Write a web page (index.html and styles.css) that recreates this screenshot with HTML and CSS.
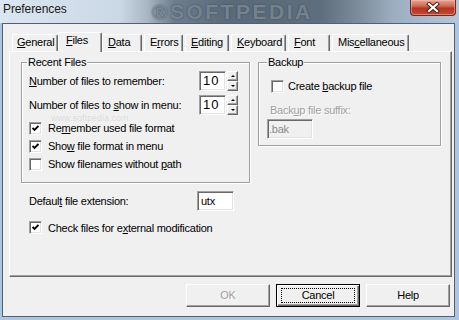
FILE: index.html
```html
<!DOCTYPE html>
<html lang="en">
<head>
    <meta charset="UTF-8">
    <title>Preferences</title>
    <link rel="stylesheet" href="styles.css">
</head>
<body>
    <div class="window">
        <div class="titlebar">
            <span class="title">Preferences</span>
            <span class="title-mark">&reg;SOFTPEDIA</span>
            <div class="close-btn">
                <svg width="14" height="11" viewBox="0 0 14 11">
                    <path d="M3 2 L11 9 M11 2 L3 9" stroke="#4a1a12" stroke-width="4" stroke-linecap="square"/>
                    <path d="M3 2 L11 9 M11 2 L3 9" stroke="#ffffff" stroke-width="2.2" stroke-linecap="square"/>
                </svg>
            </div>
        </div>

        <div class="client">
            <div class="tabs">
                <div class="tab tab-general"><u>G</u>eneral</div>
                <div class="tab tab-files active"><u>F</u>iles</div>
                <div class="tab tab-data"><u>D</u>ata</div>
                <div class="tab tab-errors">E<u>r</u>rors</div>
                <div class="tab tab-editing"><u>E</u>diting</div>
                <div class="tab tab-keyboard"><u>K</u>eyboard</div>
                <div class="tab tab-font"><u>F</u>ont</div>
                <div class="tab tab-misc">Mis<u>c</u>ellaneous</div>
            </div>

            <div class="pane">
                <span class="mark-small">www.softpedia.com</span>

                <div class="groups">
                    <fieldset class="group recent">
                        <legend>Recent Files</legend>
                        <div class="field-row">
                            <label class="field-label"><u>N</u>umber of files to remember:</label>
                            <div class="edit num">10</div>
                            <div class="spin-btns">
                                <span class="spin-btn"><i class="arrow-up"></i></span>
                                <span class="spin-btn"><i class="arrow-down"></i></span>
                            </div>
                        </div>
                        <div class="field-row second">
                            <label class="field-label">Number of files to <u>s</u>how in menu:</label>
                            <div class="edit num">10</div>
                            <div class="spin-btns">
                                <span class="spin-btn"><i class="arrow-up"></i></span>
                                <span class="spin-btn"><i class="arrow-down"></i></span>
                            </div>
                        </div>
                        <div class="check first">
                            <span class="box"><svg width="7" height="7" viewBox="0 0 7 7"><path d="M0.5 3 L2.5 5 L6.5 1" fill="none" stroke="#000" stroke-width="1.8"/></svg></span>
                            <span>Re<u>m</u>ember used file format</span>
                        </div>
                        <div class="check">
                            <span class="box"><svg width="7" height="7" viewBox="0 0 7 7"><path d="M0.5 3 L2.5 5 L6.5 1" fill="none" stroke="#000" stroke-width="1.8"/></svg></span>
                            <span>Sho<u>w</u> file format in menu</span>
                        </div>
                        <div class="check">
                            <span class="box"></span>
                            <span>Show filenames without <u>p</u>ath</span>
                        </div>
                    </fieldset>

                    <fieldset class="group backup">
                        <legend>Backup</legend>
                        <div class="check">
                            <span class="box"></span>
                            <span>Create <u>b</u>ackup file</span>
                        </div>
                        <div class="disabled-label">Back<u>u</u>p file suffix:</div>
                        <div class="edit suffix">.bak</div>
                    </fieldset>
                </div>

                <div class="field-row ext-row">
                    <label class="field-label ext-label">Defaul<u>t</u> file extension:</label>
                    <div class="edit ext">utx</div>
                </div>
                <div class="check ext-check">
                    <span class="box"><svg width="7" height="7" viewBox="0 0 7 7"><path d="M0.5 3 L2.5 5 L6.5 1" fill="none" stroke="#000" stroke-width="1.8"/></svg></span>
                    <span>Check files for e<u>x</u>ternal modification</span>
                </div>
            </div>

            <div class="buttons">
                <div class="btn disabled">OK</div>
                <div class="btn default">Cancel</div>
                <div class="btn">Help</div>
            </div>
        </div>
    </div>
</body>
</html>
```

FILE: styles.css
```css
* {
    box-sizing: border-box;
}
body {
    margin: 0;
    font-family: "Liberation Sans", Arial, sans-serif;
    font-size: 11px;
    letter-spacing: -0.25px;
    color: #000;
    background-color: #aac6e2;
}
u {
    text-decoration: underline;
    text-underline-offset: 1px;
}

/* window frame */
.window {
    width: 459px;
    height: 320px;
    display: flex;
    flex-direction: column;
    background-color: #aac6e2;
}
.titlebar {
    position: relative;
    flex: none;
    height: 23px;
    display: flex;
    align-items: flex-start;
    background: linear-gradient(90deg, #dae6f1 0%, #cbd8e5 26%, #a9b6c3 32%, #6e7d8b 38%, #5b6a78 50%, #5f6e7c 70%, #7d8c9a 78%, #9cafc2 86%, #b3c7db 100%);
}
.title {
    position: relative;
    z-index: 1;
    margin: 2px 0 0 3px;
    font-size: 12px;
    line-height: 14px;
    letter-spacing: -0.1px;
    color: #1a1a1a;
}
.title-mark {
    position: absolute;
    left: 152px;
    top: 0;
    font-size: 21px;
    line-height: 23px;
    font-weight: bold;
    letter-spacing: 2.5px;
    color: rgba(140, 154, 168, 0.7);
    text-shadow: 0 0 2px #3a4856;
}
.close-btn {
    position: relative;
    z-index: 1;
    margin-left: auto;
    margin-right: 3px;
    width: 46px;
    height: 16px;
    display: flex;
    align-items: center;
    justify-content: center;
    border: 1px solid #6e2a20;
    border-top: none;
    border-radius: 0 0 4px 4px;
    background: linear-gradient(180deg, #e3a795 0%, #d06a56 40%, #b8331f 55%, #c24a34 100%);
    box-shadow: inset 0 0 0 1px rgba(255, 200, 190, 0.45);
}

.client {
    flex: 1;
    display: flex;
    flex-direction: column;
    margin: 0 4px 3px 2px;
    padding: 8px 2px 0 6px;
    border: 1px solid #55606c;
    background-color: #f0f0f0;
}

/* tabs */
.tabs {
    position: relative;
    z-index: 1;
    display: flex;
    align-items: flex-end;
    gap: 2px;
    height: 19px;
    padding-left: 3px;
}
.tab {
    height: 17px;
    padding-left: 5px;
    line-height: 15px;
    white-space: nowrap;
    border: 1px solid;
    border-color: #fff #696969 transparent #fff;
    border-bottom: none;
    border-radius: 2px 2px 0 0;
    box-shadow: inset -1px 0 0 #a0a0a0;
    background-color: #f0f0f0;
}
.tab.active {
    height: 20px;
    margin: 0 -2px -1px;
    padding-left: 7px;
}
.tab-general { width: 46px; padding-left: 4px; }
.tab-files { width: 40px; }
.tab-files.active { width: 44px; }
.tab-data { width: 40px; }
.tab-errors { width: 39px; }
.tab-editing { width: 44px; }
.tab-keyboard { width: 55px; }
.tab-font { width: 42px; }
.tab-misc { width: 77px; }

.pane {
    position: relative;
    flex: none;
    height: 226px;
    padding: 4px 9px 0 11px;
    border: 1px solid;
    border-color: #fff #696969 #696969 #fff;
    box-shadow: inset -1px -1px 0 #a0a0a0;
}
.mark-small {
    position: absolute;
    left: 41px;
    top: 61px;
    font-size: 9px;
    letter-spacing: 0;
    color: rgba(0, 0, 0, 0.12);
    pointer-events: none;
}

/* group boxes */
.groups {
    display: flex;
    gap: 8px;
    align-items: flex-start;
}
.group {
    margin: 0;
    display: flex;
    flex-direction: column;
    border: 1px solid #a0a0a0;
    box-shadow: 1px 1px 0 #fff, inset 1px 1px 0 #fff;
}
.group legend {
    padding: 0 1px;
    line-height: 13px;
    background-color: #f0f0f0;
}
.recent {
    width: 229px;
    padding: 2px 0 9px 7px;
}
.recent legend {
    margin-left: -2px;
}
.backup {
    width: 183px;
    padding: 7px 0 6px 12px;
}
.backup legend {
    margin-left: -4px;
}

/* fields */
.field-row {
    display: flex;
    align-items: center;
    height: 20px;
}
.field-row.second {
    margin-top: 4px;
}
.field-label {
    width: 170px;
    flex: none;
}
.edit {
    height: 20px;
    padding: 1px 0 0 1px;
    line-height: 16px;
    background-color: #fff;
    border: 1px solid;
    border-color: #a0a0a0 #fff #fff #a0a0a0;
    box-shadow: inset 1px 1px 0 #696969, inset -1px -1px 0 #e3e3e3;
}
.edit.num {
    width: 27px;
    padding-left: 3px;
    font-size: 13px;
    letter-spacing: 1px;
}
.spin-btns {
    display: flex;
    flex-direction: column;
    margin-left: 1px;
    width: 11px;
    height: 20px;
}
.spin-btn {
    flex: 1;
    display: flex;
    align-items: center;
    justify-content: center;
    border: 1px solid;
    border-color: #fff #696969 #696969 #fff;
    box-shadow: inset -1px -1px 0 #a0a0a0;
    background-color: #f0f0f0;
}
.arrow-up {
    border-left: 2px solid transparent;
    border-right: 2px solid transparent;
    border-bottom: 2px solid #000;
}
.arrow-down {
    border-left: 2px solid transparent;
    border-right: 2px solid transparent;
    border-top: 2px solid #000;
}

.check {
    display: flex;
    align-items: center;
    height: 18px;
    white-space: nowrap;
}
.check.first {
    margin-top: 4px;
}
.box {
    width: 13px;
    height: 13px;
    flex: none;
    margin-right: 6px;
    display: flex;
    align-items: center;
    justify-content: center;
    background-color: #fff;
    border: 1px solid;
    border-color: #a0a0a0 #fff #fff #a0a0a0;
    box-shadow: inset 1px 1px 0 #696969, inset -1px -1px 0 #e3e3e3;
}
.backup .check {
    height: 20px;
}
.backup .box {
    margin-right: 4px;
}
.disabled-label {
    margin: 8px 0 0 -1px;
    line-height: 13px;
    color: #a0a0a0;
    text-shadow: 1px 1px 0 #fff;
}
.edit.suffix {
    width: 46px;
    margin: 2px 0 0 -4px;
    color: #8a8a8a;
    background-color: #f0f0f0;
}

.ext-row {
    margin: 8px 0 0 8px;
}
.ext-label {
    width: 168px;
}
.edit.ext {
    width: 37px;
    padding-left: 3px;
}
.ext-check {
    margin: 7px 0 0 8px;
    height: 19px;
}

/* dialog buttons */
.buttons {
    display: flex;
    justify-content: flex-end;
    gap: 6px;
    margin-top: 7px;
    padding-right: 2px;
}
.btn {
    position: relative;
    width: 84px;
    height: 23px;
    line-height: 20px;
    text-align: center;
    border: 1px solid;
    border-color: #fff #696969 #696969 #fff;
    box-shadow: inset -1px -1px 0 #a0a0a0;
    background-color: #f0f0f0;
}
.btn.disabled {
    color: #a0a0a0;
    text-shadow: 1px 1px 0 #fff;
}
.btn.default {
    border-color: #000;
    box-shadow: inset 1px 1px 0 #fff, inset -1px -1px 0 #696969, inset -2px -2px 0 #a0a0a0;
}
.btn.default::after {
    content: "";
    position: absolute;
    left: 4px;
    top: 3px;
    right: 4px;
    bottom: 3px;
    border: 1px dotted #000;
}
```
